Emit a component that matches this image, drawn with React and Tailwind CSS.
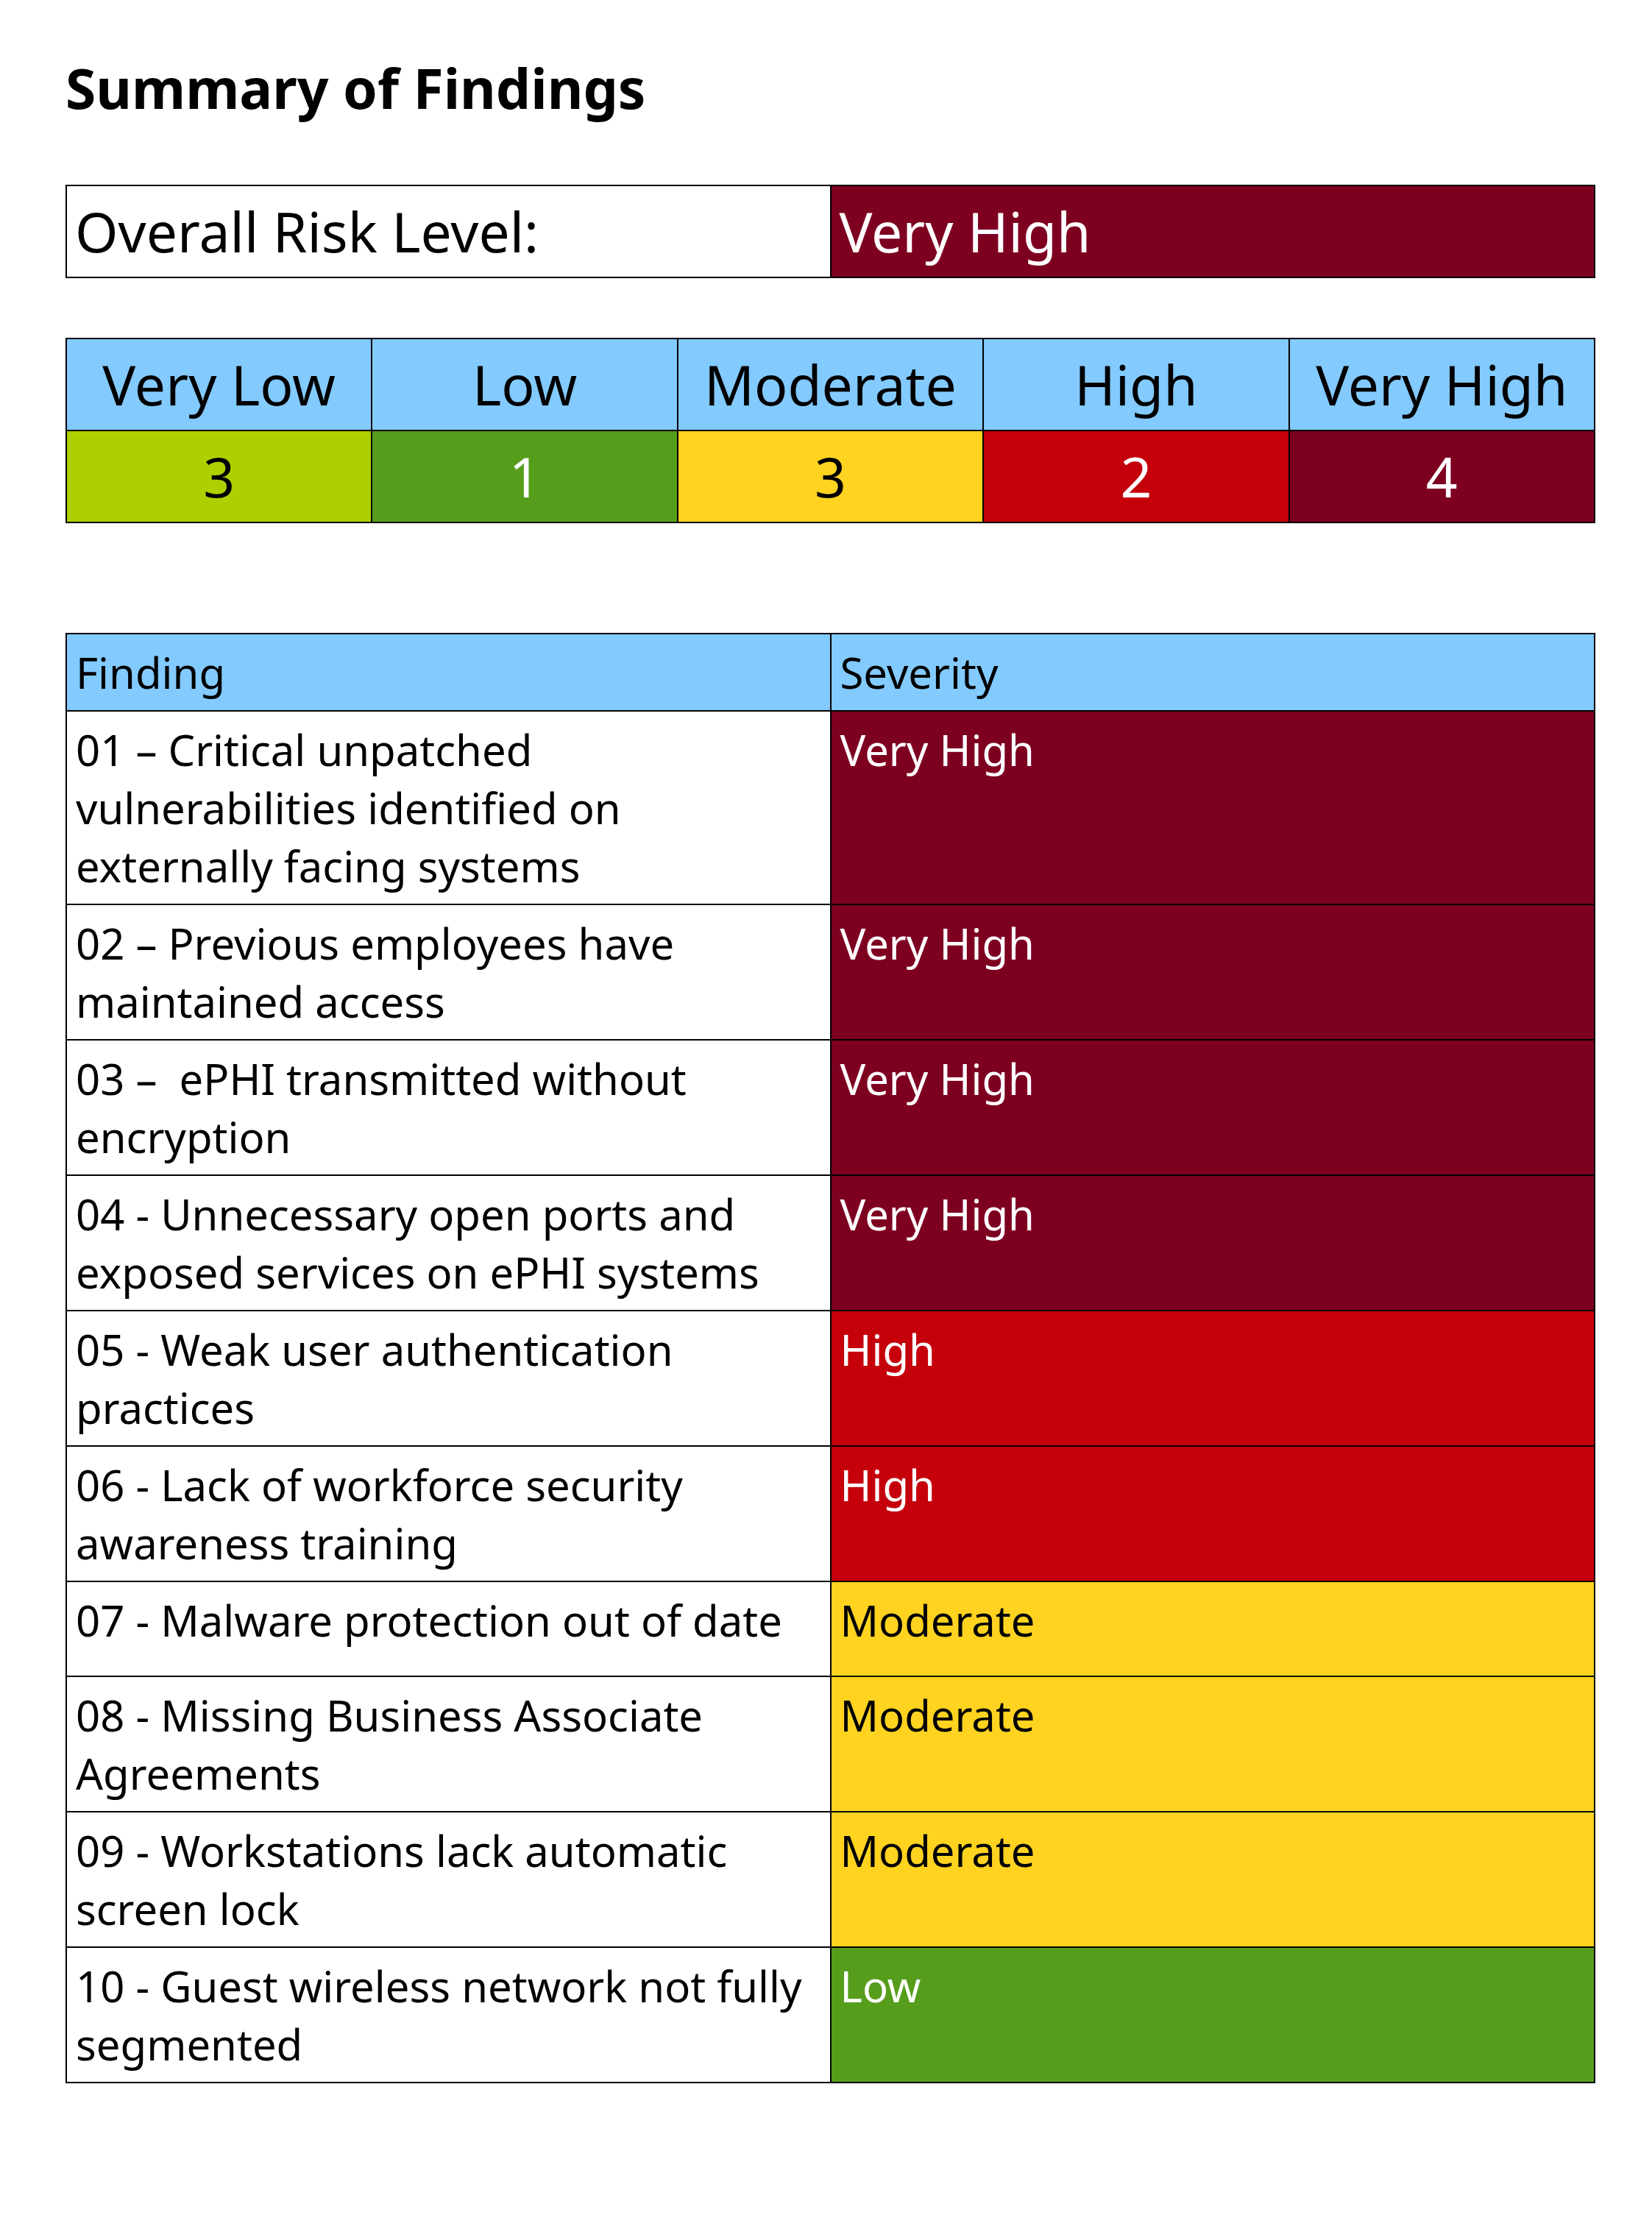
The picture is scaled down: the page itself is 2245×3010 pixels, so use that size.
const levels = [
  { label: 'Very Low', count: 3, cls: 'bg-[#aecf00] text-black' },
  { label: 'Low', count: 1, cls: 'bg-[#579d1c] text-white' },
  { label: 'Moderate', count: 3, cls: 'bg-[#ffd320] text-black' },
  { label: 'High', count: 2, cls: 'bg-[#c5000b] text-white' },
  { label: 'Very High', count: 4, cls: 'bg-[#7e0021] text-white' },
];

const sevStyle = {
  'Very High': 'bg-[#7e0021] text-white',
  High: 'bg-[#c5000b] text-white',
  Moderate: 'bg-[#ffd320] text-black',
  Low: 'bg-[#579d1c] text-white',
};

const findings = [
  { text: '01 – Critical unpatched vulnerabilities identified on externally facing systems', sev: 'Very High' },
  { text: '02 – Previous employees have maintained access', sev: 'Very High' },
  { text: '03 –\u00a0 ePHI transmitted without encryption', sev: 'Very High' },
  { text: '04 - Unnecessary open ports and exposed services on ePHI systems', sev: 'Very High' },
  { text: '05 - Weak user authentication practices', sev: 'High' },
  { text: '06 - Lack of workforce security awareness training', sev: 'High' },
  { text: '07 - Malware protection out of date', sev: 'Moderate', tall: true },
  { text: '08 - Missing Business Associate Agreements', sev: 'Moderate' },
  { text: '09 - Workstations lack automatic screen lock', sev: 'Moderate' },
  { text: '10 - Guest wireless network not fully segmented', sev: 'Low' },
];

export default function App() {
  return (
    <div className="min-h-screen bg-white pl-[89px] pr-[77px] pt-[69px] pb-[180px] text-black font-['Noto_Sans','Open_Sans',sans-serif]">
      <h1 className="text-[75px] font-bold leading-[101px]">Summary of Findings</h1>

      {/* Overall risk */}
      <table className="mt-[81px] w-full table-fixed border-collapse text-[75px] leading-[101px]">
        <tbody>
          <tr>
            <td className="border-2 border-black px-[11px] py-[11px]">Overall Risk Level:</td>
            <td className="border-2 border-black bg-[#7e0021] px-[11px] py-[11px] text-white">Very High</td>
          </tr>
        </tbody>
      </table>

      {/* Counts by level */}
      <table className="mt-[81px] w-full table-fixed border-collapse text-center text-[75px] leading-[101px]">
        <thead>
          <tr>
            {levels.map((l) => (
              <th key={l.label} className="border-2 border-black bg-[#83caff] py-[11px] font-normal">{l.label}</th>
            ))}
          </tr>
        </thead>
        <tbody>
          <tr>
            {levels.map((l) => (
              <td key={l.label} className={`border-2 border-black py-[11px] ${l.cls}`}>{l.count}</td>
            ))}
          </tr>
        </tbody>
      </table>

      {/* Findings */}
      <table className="mt-[149px] w-full table-fixed border-collapse text-left text-[58px] leading-[79px]">
        <thead>
          <tr className="bg-[#83caff]">
            <th className="border-2 border-black px-[12px] py-[12px] font-normal">Finding</th>
            <th className="border-2 border-black px-[12px] py-[12px] font-normal">Severity</th>
          </tr>
        </thead>
        <tbody>
          {findings.map((f) => (
            <tr key={f.text} className={f.tall ? 'h-[129px]' : ''}>
              <td className="border-2 border-black px-[12px] py-[12px] align-top">{f.text}</td>
              <td className={`border-2 border-black px-[12px] py-[12px] align-top ${sevStyle[f.sev]}`}>{f.sev}</td>
            </tr>
          ))}
        </tbody>
      </table>
    </div>
  );
}
